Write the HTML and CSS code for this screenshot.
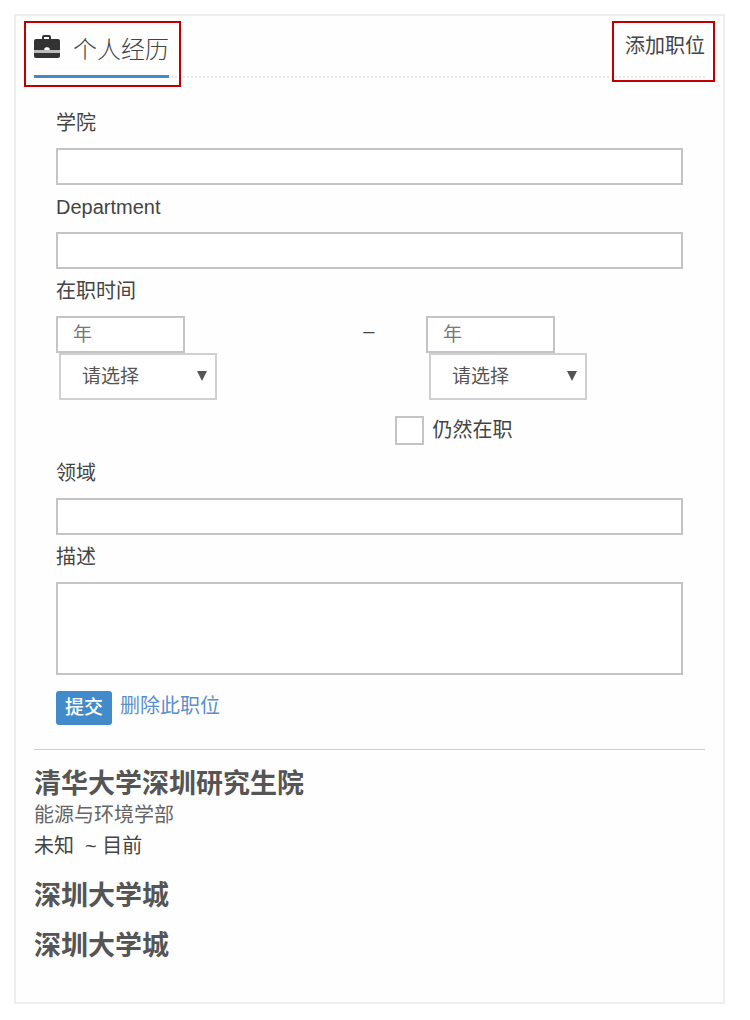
FILE: index.html
```html
<!DOCTYPE html>
<html lang="zh-CN">
<head>
    <meta charset="UTF-8">
    <meta name="viewport" content="width=device-width, initial-scale=1.0">
    <title>个人经历</title>
    <link rel="stylesheet" href="styles.css">
</head>
<body>

    <main class="card">
        <!-- Header -->
        <header class="card-header">
            <h2 class="card-title marked">
                <svg class="icon" viewBox="0 0 26 24" aria-hidden="true">
                    <path fill="#bbb" d="M0 14h26v4H0z"/>
                    <path fill="#333" fill-rule="evenodd" d="M8 4V2Q8 0 10 0h5q2 0 2 2v2h7q2 0 2 2v9H15.500v-1q0-1.500-1.500-1.500h-2q-1.500 0-1.500 1.500v1H0V6q0-2 2-2zM10 4h5V2h-5z"/>
                    <path fill="#fff" d="M10.500 15v-1q0-1.500 1.500-1.500h2q1.500 0 1.500 1.500v1z"/>
                    <path fill="#333" d="M0 18h26v3q0 2-2 2H2q-2 0-2-2z"/>
                </svg>
                个人经历
            </h2>
            <a class="add-link marked" href="#">添加职位</a>
        </header>

        <!-- Position form -->
        <form class="position-form">
            <label class="field-label" for="school">学院</label>
            <input class="field" id="school" type="text">

            <label class="field-label" for="department">Department</label>
            <input class="field" id="department" type="text">

            <label class="field-label" for="start-year">在职时间</label>
            <div class="period">
                <div class="date">
                    <input class="field year" id="start-year" type="text" placeholder="年">
                    <div class="month">
                        <select aria-label="开始月份">
                            <option>请选择</option>
                        </select>
                    </div>
                </div>
                <span class="dash">–</span>
                <div class="date">
                    <input class="field year" type="text" placeholder="年" aria-label="结束年份">
                    <div class="month">
                        <select aria-label="结束月份">
                            <option>请选择</option>
                        </select>
                    </div>
                </div>
            </div>

            <div class="current">
                <input class="checkbox" id="current" type="checkbox">
                <label for="current">仍然在职</label>
            </div>

            <label class="field-label" for="area">领域</label>
            <input class="field" id="area" type="text">

            <label class="field-label" for="description">描述</label>
            <textarea class="field description" id="description"></textarea>

            <div class="actions">
                <button class="submit" type="submit">提交</button>
                <a class="delete-link" href="#">删除此职位</a>
            </div>
        </form>

        <!-- Saved positions -->
        <section class="positions">
            <div class="position">
                <h3>清华大学深圳研究生院</h3>
                <p class="unit">能源与环境学部</p>
                <p>未知&nbsp; ~ 目前</p>
            </div>
            <div class="position">
                <h3>深圳大学城</h3>
            </div>
            <div class="position">
                <h3>深圳大学城</h3>
            </div>
        </section>
    </main>

</body>
</html>
```
FILE: styles.css
```css
* {
    box-sizing: border-box;
}
body {
    margin: 14px 25px 14px 14px;
    background-color: #fff;
    color: #444;
    font-family: "Liberation Sans", "Noto Sans CJK SC", sans-serif;
    font-size: 20px;
    line-height: 30px;
}
h2, h3, p {
    margin: 0;
}
a {
    text-decoration: none;
}
input, select, textarea, button {
    margin: 0;
    font-family: inherit;
    font-size: 19px;
}
.card {
    padding: 0 18px 22px;
    border: 2px solid #eee;
    background-color: #fefefe;
    box-shadow: 0 0 6px #eee;
}
.card-header {
    display: flex;
    justify-content: space-between;
    border-bottom: 2px dotted #e8e8f0;
}
.card-title {
    display: flex;
    align-items: center;
    gap: 13px;
    height: 62px;
    margin-bottom: -2px;
    padding-top: 9px;
    border-bottom: 3px solid #428bca;
    color: #444;
    font-size: 24px;
    font-weight: 300;
}
.icon {
    width: 26px;
    height: 24px;
    margin-bottom: 7px;
}
.add-link {
    padding-top: 15px;
    color: #444;
}
/* red frame around the highlighted parts */
.marked {
    position: relative;
}
.marked::after {
    content: "";
    position: absolute;
    inset: 5px -12px -12px -10px;
    border: 2px solid #c00000;
}
.add-link.marked::after {
    inset: 5px -10px -6px -13px;
}
.position-form {
    padding: 23px 22px 24px;
}
.field-label {
    display: block;
    padding: 7px 0 10px;
}
.field {
    display: block;
    width: 100%;
    height: 37px;
    padding: 0 15px;
    border: 2px solid #c4c4c4;
    border-radius: 0;
    background-color: #fff;
    color: #555;
}
.field::placeholder {
    color: #777;
    opacity: 1;
}
.period {
    display: grid;
    grid-template-columns: 49% 10% 1fr;
}
.year {
    width: 129px;
}
.month {
    position: relative;
    width: 158px;
    margin-left: 3px;
}
.month select {
    display: block;
    width: 100%;
    height: 47px;
    padding: 0 21px;
    appearance: none;
    border: 2px solid #d0d0d0;
    border-radius: 0;
    background-color: #fff;
    color: #555;
}
.month::after {
    content: "";
    position: absolute;
    top: 18px;
    right: 10px;
    border-top: 10px solid #555;
    border-left: 5px solid transparent;
    border-right: 5px solid transparent;
    pointer-events: none;
}
.current {
    display: flex;
    align-items: center;
    gap: 9px;
    padding: 15px 0 6px 54%;
}
.checkbox {
    width: 29px;
    height: 29px;
    appearance: none;
    border: 2px solid #c4c4c4;
    background-color: #fff;
}
.description {
    height: 93px;
    resize: none;
}
.actions {
    display: flex;
    align-items: flex-start;
    gap: 8px;
    padding-top: 16px;
}
.submit {
    padding: 0 9px;
    border: 0;
    border-radius: 3px;
    background-color: #428bca;
    color: #fff;
    font-weight: 500;
    line-height: 34px;
}
.delete-link {
    color: #5a8fcb;
}
.positions {
    padding-top: 18px;
    border-top: 1px solid #ccc;
}
.position {
    margin-bottom: 18px;
}
.position h3 {
    color: #555;
    font-size: 27px;
    line-height: 32px;
}
.position p {
    line-height: 31px;
}
.unit {
    color: #666;
}
```
